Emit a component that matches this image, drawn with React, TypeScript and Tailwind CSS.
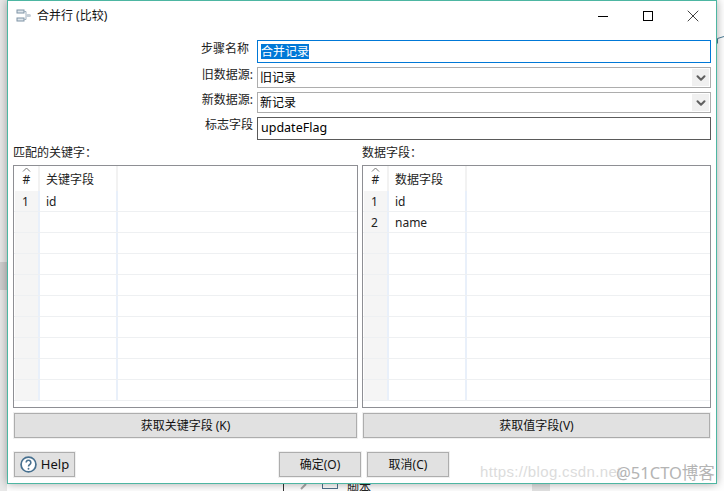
import { ReactNode } from 'react';
import { ChevronDown, X } from 'lucide-react';

const FONT = "font-['Noto_Sans','Noto_Sans_CJK_SC',sans-serif]";

function FormRow({ label, height, labelClass, children }: { label: string; height: string; labelClass: string; children: ReactNode }) {
  return (
    <div className={`flex items-start ${height}`}>
      <div className={`w-[245px] shrink-0 text-right text-[12px] leading-[16px] text-[#222] ${labelClass}`}>{label}</div>
      <div className="ml-[4px] w-[454px] h-full">{children}</div>
    </div>
  );
}

function Combo({ value }: { value: string }) {
  return (
    <div className="flex items-center justify-between h-full border border-[#adadad] pl-[2px] pr-px text-[12px] text-black">
      <span>{value}</span>
      <span className="flex items-center justify-center w-[17px] h-[17px] bg-[#f0f0f0]">
        <ChevronDown size={14} strokeWidth={3.5} className="text-[#606060]" />
      </span>
    </div>
  );
}

function FieldTable({ title, column, rows, width }: { title: string; column: string; rows: string[]; width: string }) {
  const cells = Array.from({ length: 10 }, (_, i) => rows[i] ?? '');
  return (
    <div className={width}>
      <div className="h-[20px] pt-px text-[12px] leading-[14px] text-[#222]">{title}</div>
      <div className="h-[243px] border border-[#8e8f94] bg-white overflow-hidden">
        <div className="flex h-[25px] text-[12px] text-[#222]">
          <div className="relative w-[25px] ml-px border-r-2 border-[#f2f2f2] pt-[5px] text-center">
            <svg className="absolute left-[7px] top-[1px]" width="9" height="5" viewBox="0 0 9 5" fill="none" stroke="#777">
              <path d="M1 4.5L4.5 1L8 4.5" />
            </svg>
            #
          </div>
          <div className="w-[78px] border-r-2 border-[#f2f2f2] pl-[6px] pt-[5px]">{column}</div>
        </div>
        {cells.map((cell, i) => (
          <div key={i} className="flex h-[21px] border-b border-[#eef0f2] text-[12px] leading-[22px] text-[#222]">
            <div className="w-[25px] ml-px border-r-2 border-[#e9f0fa] bg-[#f5f5f5] pl-[7px]">{cell ? i + 1 : ''}</div>
            <div className="w-[78px] border-r-2 border-[#e9f0fa] pl-[6px]">{cell}</div>
          </div>
        ))}
      </div>
    </div>
  );
}

function ActionButton({ children, className }: { children: ReactNode; className: string }) {
  return (
    <button className={`flex items-center justify-center border border-[#adadad] bg-[#e1e1e1] text-[12px] text-[#111] outline outline-1 outline-[#f0f0f0] ${className}`}>
      {children}
    </button>
  );
}

export default function App() {
  return (
    <div className={`relative w-[724px] h-[491px] overflow-hidden bg-white ${FONT}`}>
      {/* application behind the dialog */}
      <div className="absolute left-0 top-0 w-[7px] h-[491px] bg-[#e9e9e9]" />
      <div className="absolute left-0 top-[262px] w-[7px] h-[28px] bg-[#cfcfcf]" />
      <div className="absolute left-[283px] top-[483px] w-px h-[8px] bg-[#333]" />
      <svg className="absolute left-[299px] top-[484px]" width="8" height="7" viewBox="0 0 8 7" fill="none" stroke="#a8a8a8" strokeWidth="2">
        <path d="M7 0L2 5" />
      </svg>
      <div className="absolute left-[322px] top-[484px] w-[16px] h-[5px] border-x border-b border-[#50708c]" />
      <div className="absolute left-[347px] top-[481px] text-[12px] leading-[14px] text-[#222]">脚本</div>
      <div className="absolute left-[532px] top-[484px] w-[18px] h-[7px] bg-[#e4e4e4]" />
      <svg className="absolute left-[717px] top-[36px]" width="7" height="8" viewBox="0 0 7 8" fill="none" stroke="#4b7c96">
        <path d="M0.5 7.5V2.5L7 0.5" />
      </svg>

      <div className="relative ml-[7px] w-[710px] h-[484px] border border-[#4db6a2] bg-white shadow-[0_0_9px_rgba(0,0,0,0.35)]">
        <div className="flex items-center h-[39px] pb-[9px]">
          <svg className="ml-[8px]" width="16" height="14" viewBox="0 0 16 14" fill="none">
            <rect x="1" y="1" width="7" height="3" fill="#dfe6ec" stroke="#7f94a6" />
            <rect x="1" y="9" width="7" height="3" fill="#dfe6ec" stroke="#7f94a6" />
            <path d="M8 2.5h2v4M8 10.5h2v-4" stroke="#9fb0bf" />
            <rect x="10" y="5" width="5" height="3" rx="1.5" fill="#c4ced7" />
          </svg>
          <span className="ml-[5px] text-[12px] text-[#111]">合并行 (比较)</span>
          <div className="ml-auto flex items-center">
            <span className="w-[10px] h-px bg-black" />
            <span className="ml-[35px] w-[10px] h-[10px] border border-black" />
            <X size={20} strokeWidth={0.9} className="ml-[30px] mr-[13px] text-black" />
          </div>
        </div>

        <div className="flex flex-col gap-[4px] h-[100px]">
          <FormRow label="步骤名称" height="h-[23px]" labelClass="pr-[4px] pt-px">
            <div className="h-full border border-[#0078d7] pl-[3px] pt-[3px]">
              <span className="block w-fit bg-[#0078d7] text-[12px] leading-[15px] text-white">合并记录</span>
            </div>
          </FormRow>
          <FormRow label="旧数据源:" height="h-[21px]" labelClass="">
            <Combo value="旧记录" />
          </FormRow>
          <FormRow label="新数据源:" height="h-[21px]" labelClass="">
            <Combo value="新记录" />
          </FormRow>
          <FormRow label="标志字段" height="h-[23px]" labelClass="">
            <div className="flex items-center h-full border border-[#5a5a5a] pl-[3px] text-[12.5px] text-black">updateFlag</div>
          </FormRow>
        </div>

        <div className="flex mt-[5px] ml-[5px] gap-[4px]">
          <FieldTable title="匹配的关键字：" column="关键字段" rows={['id']} width="w-[345px]" />
          <FieldTable title="数据字段：" column="数据字段" rows={['id', 'name']} width="w-[349px]" />
        </div>

        <div className="flex mt-[5px] ml-[6px] gap-[6px]">
          <ActionButton className="w-[343px] h-[25px]">获取关键字段 (K)</ActionButton>
          <ActionButton className="w-[347px] h-[25px]">获取值字段(V)</ActionButton>
        </div>

        <div className="flex mt-[14px] ml-[6px]">
          <ActionButton className="w-[61px] h-[25px] gap-[4px] text-[13px]">
            <svg width="17" height="17" viewBox="0 0 16 16" fill="none">
              <circle cx="8" cy="8" r="7" fill="#fff" stroke="#47708f" strokeWidth="1.6" />
              <path d="M5.8 6.2a2.2 2.2 0 1 1 3.4 1.8c-.8.5-1.2.9-1.2 1.8" stroke="#47708f" strokeWidth="1.5" />
              <circle cx="8" cy="12" r="0.9" fill="#47708f" />
            </svg>
            Help
          </ActionButton>
          <ActionButton className="ml-[204px] w-[82px] h-[25px]">确定(O)</ActionButton>
          <ActionButton className="ml-[6px] w-[82px] h-[25px]">取消(C)</ActionButton>
        </div>
      </div>

      {/* blog watermark */}
      <div className="absolute left-[480px] top-[463px] font-['Liberation_Sans',sans-serif] text-[15px] leading-[18px] tracking-[0.35px] text-[#dcdcdc]">https://blog.csdn.net</div>
      <div className="absolute left-[616px] top-[463px] text-[16.5px] leading-[20px] text-[#b4b4b4]">@51CTO博客</div>
    </div>
  );
}
